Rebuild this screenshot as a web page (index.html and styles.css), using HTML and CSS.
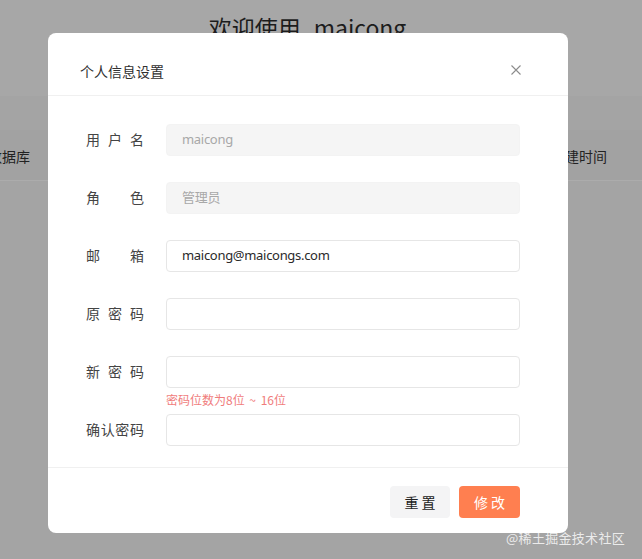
FILE: index.html
```html
<!DOCTYPE html>
<html lang="zh">
<head>
<meta charset="utf-8">
<title>个人信息设置</title>
<link rel="stylesheet" href="styles.css">
</head>
<body>
<div class="page">
  <header class="top">
    <h1 class="welcome">欢迎使用<span class="user">maicong</span></h1>
  </header>
  <div class="gap-band"></div>
  <div class="table-head">
    <span class="th-left">数据库</span>
    <span class="th-right">建时间</span>
  </div>
</div>

<div class="dialog">
  <div class="dialog-header">
    <span class="dialog-title">个人信息设置</span>
    <span class="close" aria-label="close">
      <svg width="10" height="10" viewBox="0 0 10 10"><path d="M0.5 0.5 L9.5 9.5 M9.5 0.5 L0.5 9.5" stroke="#8c8c8c" stroke-width="1.1" fill="none"/></svg>
    </span>
  </div>
  <div class="dialog-body">
    <div class="row">
      <label class="label">用户名</label>
      <div class="input disabled">maicong</div>
    </div>
    <div class="row">
      <label class="label">角色</label>
      <div class="input disabled">管理员</div>
    </div>
    <div class="row">
      <label class="label">邮箱</label>
      <div class="input">maicong@maicongs.com</div>
    </div>
    <div class="row">
      <label class="label">原密码</label>
      <div class="input"></div>
    </div>
    <div class="row has-error">
      <label class="label">新密码</label>
      <div class="field">
        <div class="input"></div>
        <div class="error">密码位数为8位 ~ 16位</div>
      </div>
    </div>
    <div class="row">
      <label class="label">确认密码</label>
      <div class="input"></div>
    </div>
  </div>
  <div class="dialog-footer">
    <button class="btn btn-reset">重置</button>
    <button class="btn btn-primary">修改</button>
  </div>
</div>

<div class="watermark">@稀土掘金技术社区</div>
</body>
</html>
```

FILE: styles.css
```css
* { box-sizing: border-box; }
html, body {
  margin: 0;
  padding: 0;
  width: 642px;
  height: 559px;
  overflow: hidden;
}
body {
  background: #a4a4a4;
  font-family: "Noto Sans", "Noto Sans CJK SC", sans-serif;
  color: #333;
  position: relative;
}
.page {
  display: flex;
  flex-direction: column;
}
.top {
  height: 96px;
  background: #a7a7a7;
  display: flex;
  justify-content: center;
}
.welcome {
  margin: 11px 0 0 0;
  padding-right: 27px;
  font-size: 23px;
  font-weight: 400;
  color: #1c1c1c;
  line-height: 32px;
  font-family: "Noto Sans CJK SC", sans-serif;
}
.user { margin-left: 13px; }
.gap-band {
  height: 34px;
  background: #a4a4a4;
}
.table-head {
  height: 51px;
  background: #a2a2a2;
  border-bottom: 1px solid #acacac;
  display: flex;
  justify-content: space-between;
  align-items: center;
  font-size: 14px;
  color: #222;
  font-family: "Noto Sans CJK SC", sans-serif;
  padding-top: 2px;
}
.th-left { margin-left: -12px; }
.th-right { margin-right: 35px; }

.dialog {
  position: absolute;
  left: 48px;
  top: 33px;
  width: 520px;
  height: 500px;
  background: #fff;
  border-radius: 8px;
  display: flex;
  flex-direction: column;
}
.dialog-header {
  height: 63px;
  padding: 29px 48px 0 32px;
  border-bottom: 1px solid #f0f0f0;
  display: flex;
  justify-content: space-between;
  align-items: flex-start;
}
.dialog-title {
  font-size: 14px;
  line-height: 18px;
  color: #303030;
  font-family: "Noto Sans CJK SC", sans-serif;
}
.close {
  display: flex;
  margin-top: 3px;
  margin-right: -1px;
}
.dialog-body {
  height: 371px;
  padding: 28px 48px 0 38px;
  display: flex;
  flex-direction: column;
  gap: 26px;
}
.row {
  display: flex;
  align-items: flex-start;
}
.row.has-error { margin-bottom: -26px; }
.label {
  width: 58px;
  margin-right: 22px;
  font-size: 14px;
  line-height: 30px;
  height: 32px;
  color: #444;
  text-align: justify;
  text-align-last: justify;
  font-family: "Noto Sans CJK SC", sans-serif;
}
.field {
  flex: 1;
  display: flex;
  flex-direction: column;
}
.input {
  flex: 1;
  height: 32px;
  border: 1px solid #e6e6e6;
  border-radius: 4px;
  padding: 0 15px;
  font-size: 13px;
  line-height: 28px;
  letter-spacing: -0.3px;
  color: #2a2a2a;
}
.field .input { flex: none; }
.input.disabled {
  background: #f5f5f5;
  border-color: #f3f3f3;
  color: #a8a8a8;
}
.error {
  font-size: 12px;
  line-height: 16px;
  height: 26px;
  padding-top: 4px;
  color: #f07c7c;
  word-spacing: 2px;
  font-family: "Noto Sans CJK SC", sans-serif;
}
.dialog-footer {
  flex: 1;
  border-top: 1px solid #f0f0f0;
  padding: 18px 48px 0 0;
  display: flex;
  justify-content: flex-end;
  align-items: flex-start;
  gap: 9px;
}
.btn {
  height: 32px;
  border: none;
  border-radius: 4px;
  font-size: 14px;
  letter-spacing: 3px;
  padding: 0 0 0 3px;
  font-family: "Noto Sans CJK SC", sans-serif;
  cursor: pointer;
}
.btn-reset {
  width: 60px;
  background: #f4f4f5;
  color: #222;
}
.btn-primary {
  width: 61px;
  background: #ff7f50;
  color: #fff;
}
.watermark {
  position: absolute;
  right: 17px;
  bottom: 12px;
  font-size: 13px;
  color: rgba(255,255,255,0.8);
  font-family: "Noto Sans CJK SC", sans-serif;
  letter-spacing: 0.3px;
}
```
